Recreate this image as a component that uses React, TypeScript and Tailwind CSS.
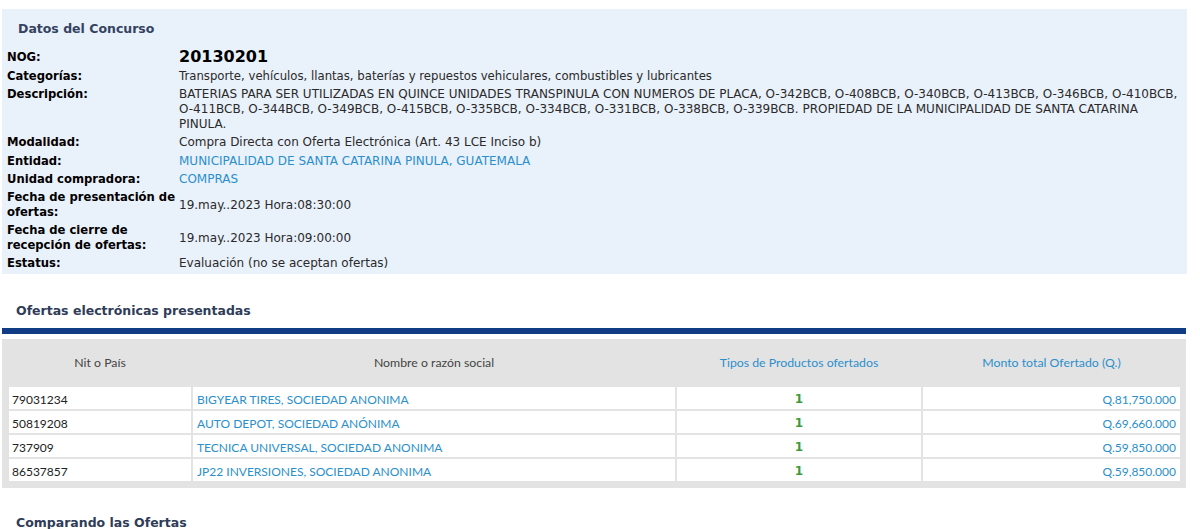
const rows = [
  { nit: "79031234", name: "BIGYEAR TIRES, SOCIEDAD ANONIMA", tipos: 1, monto: "Q.81,750.000" },
  { nit: "50819208", name: "AUTO DEPOT, SOCIEDAD ANÓNIMA", tipos: 1, monto: "Q.69,660.000" },
  { nit: "737909", name: "TECNICA UNIVERSAL, SOCIEDAD ANONIMA", tipos: 1, monto: "Q.59,850.000" },
  { nit: "86537857", name: "JP22 INVERSIONES, SOCIEDAD ANONIMA", tipos: 1, monto: "Q.59,850.000" },
];

const Row = ({ label, children, nog }: { label: React.ReactNode; children: React.ReactNode; nog?: boolean }) => (
  <div className={`flex ${nog ? "h-[21px] items-center" : "py-[1.6px]"}`}>
    <div
      className={`w-[172px] shrink-0 whitespace-nowrap text-[11.6px] font-bold leading-[15px] text-black ${
        nog ? "self-center" : "self-start"
      }`}
    >
      {label}
    </div>
    <div className="self-center leading-[15px] text-[#2a2a2a]">{children}</div>
  </div>
);

export default function App() {
  return (
    <div className="min-h-[529px] bg-white font-['DejaVu_Sans',Verdana,sans-serif] text-[12px]">
      {/* Datos del Concurso */}
      <div className="pt-[9px] pl-[2px]">
        <div className="w-[1185px] bg-[#e9f1fb] pt-[12px] pb-[1px] pl-[5px]">
          <h2 className="ml-[11px] text-[12.5px] font-bold leading-[16px] text-[#34435f]">Datos del Concurso</h2>
          <div className="mt-[9.5px]">
            <Row label="NOG:" nog>
              <span className="text-[16px] font-bold leading-[20px] text-black">20130201</span>
            </Row>
            <Row label="Categorías:">
              <span className="text-[11.7px]">
                Transporte, vehículos, llantas, baterías y repuestos vehiculares, combustibles y lubricantes
              </span>
            </Row>
            <Row label="Descripción:">
              <div className="whitespace-nowrap">
                BATERIAS PARA SER UTILIZADAS EN QUINCE UNIDADES TRANSPINULA CON NUMEROS DE PLACA, O-342BCB, O-408BCB, O-340BCB, O-413BCB, O-346BCB, O-410BCB,
                <br />
                O-411BCB, O-344BCB, O-349BCB, O-415BCB, O-335BCB, O-334BCB, O-331BCB, O-338BCB, O-339BCB. PROPIEDAD DE LA MUNICIPALIDAD DE SANTA CATARINA
                <br />
                PINULA.
              </div>
            </Row>
            <Row label="Modalidad:">Compra Directa con Oferta Electrónica (Art. 43 LCE Inciso b)</Row>
            <Row label="Entidad:">
              <span className="text-[#2b8fcc]">MUNICIPALIDAD DE SANTA CATARINA PINULA, GUATEMALA</span>
            </Row>
            <Row label="Unidad compradora:">
              <span className="text-[#2b8fcc]">COMPRAS</span>
            </Row>
            <Row label={<>Fecha de presentación de<br />ofertas:</>}>19.may..2023 Hora:08:30:00</Row>
            <Row label={<>Fecha de cierre de<br />recepción de ofertas:</>}>19.may..2023 Hora:09:00:00</Row>
            <Row label="Estatus:">Evaluación (no se aceptan ofertas)</Row>
          </div>
        </div>
      </div>

      {/* Ofertas electrónicas presentadas */}
      <h3 className="mt-[29px] ml-[16px] text-[12.5px] font-bold leading-[16px] text-[#2f3c58]">
        Ofertas electrónicas presentadas
      </h3>
      <div className="ml-[2px] mt-[8.5px] h-[6px] w-[1184px] bg-[#103c86]" />

      <div className="ml-[2px] mt-[5px] w-[1184px] bg-[#e3e3e3] pl-[7px] pr-[6px] pb-[7px] font-['Lato',sans-serif] text-[12px]">
        <div className="grid h-[48px] grid-cols-[182px_482px_244px_257px] items-center gap-x-[2px] pt-[2px] text-center text-[12.3px]">
          <div className="text-[#444]">Nit o País</div>
          <div className="text-[#444]">Nombre o razón social</div>
          <div className="text-[#2b8fcc]">Tipos de Productos ofertados</div>
          <div className="text-[#2b8fcc]">Monto total Ofertado (Q.)</div>
        </div>
        <div className="flex flex-col gap-y-[2px]">
          {rows.map((r) => (
            <div key={r.nit} className="grid h-[22px] grid-cols-[182px_482px_244px_257px] gap-x-[2px]">
              <div className="flex items-center bg-white pt-[4px] pl-[3px] text-[#222]">{r.nit}</div>
              <div className="flex items-center bg-white pt-[4px] pl-[4px] text-[#2b8fcc]">{r.name}</div>
              <div className="flex items-center justify-center bg-white pt-[3px] font-['DejaVu_Sans',sans-serif] text-[12px] font-bold text-[#3c9a3c]">
                {r.tipos}
              </div>
              <div className="flex items-center justify-end bg-white pt-[4px] pr-[4px] text-[#2b8fcc]">{r.monto}</div>
            </div>
          ))}
        </div>
      </div>

      <h3 className="mt-[27px] ml-[16px] text-[12.5px] font-bold leading-[16px] text-[#2f3c58]">
        Comparando las Ofertas
      </h3>
    </div>
  );
}
